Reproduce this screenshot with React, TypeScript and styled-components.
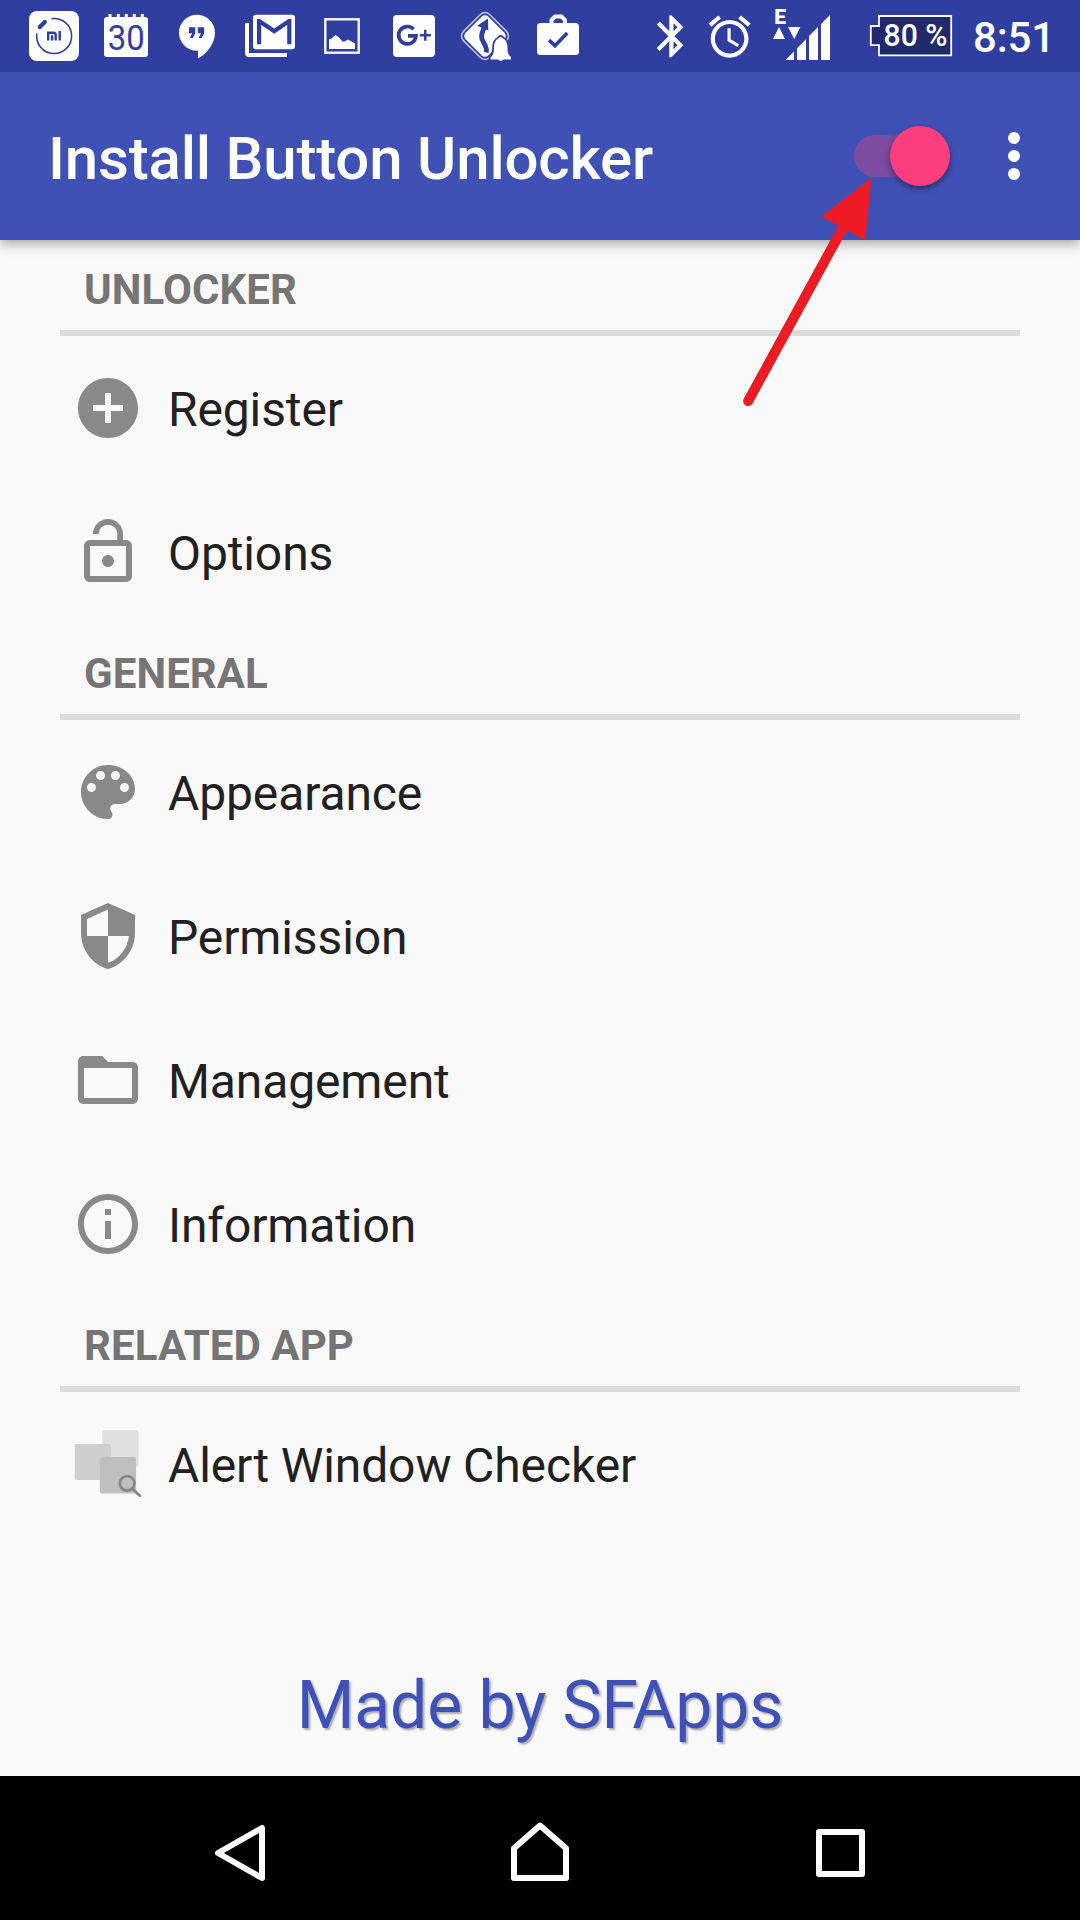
import React from "react";
import styled, { createGlobalStyle } from "styled-components";

const GlobalStyle = createGlobalStyle`
  * { box-sizing: border-box; }
  body { margin: 0; background: #f9f9f9; }
`;

const INK = "#303e9f";

const Screen = styled.div`
  position: relative;
  display: flex;
  flex-direction: column;
  width: 1080px;
  height: 1920px;
  overflow: hidden;
  background: #f9f9f9;
  color: #212121;
  font-family: Roboto, "Noto Sans", sans-serif;
`;

const StatusBar = styled.header`
  position: relative;
  z-index: 1;
  display: flex;
  flex: none;
  align-items: center;
  height: 72px;
  padding-left: 18px;
  padding-right: 29px;
  background: ${INK};
  color: #fff;
`;

const StatusGroup = styled.div<{ $end?: boolean }>`
  display: flex;
  align-items: center;
  margin-left: ${(p) => (p.$end ? "auto" : "0")};
`;

const Glyph = styled.svg`
  display: block;
  flex: none;
`;

const Clock = styled.time`
  width: 78px;
  margin-left: 17px;
  font-size: 42px;
  font-weight: 500;
  line-height: 48px;
  letter-spacing: -0.2px;
  white-space: nowrap;
  padding-top: 4px;
`;

const AppBar = styled.div`
  position: relative;
  display: flex;
  flex: none;
  align-items: center;
  height: 168px;
  padding: 0 36px 0 48px;
  background: #3f51b5;
  box-shadow: 0 3px 12px rgba(0, 0, 0, 0.38);
`;

const Title = styled.h1`
  flex: 1;
  margin: 0;
  padding-top: 5px;
  color: #fff;
  font-size: 60px;
  font-weight: 500;
  line-height: 70px;
  letter-spacing: -0.19px;
  white-space: nowrap;
`;

const Track = styled.div`
  display: flex;
  align-items: center;
  justify-content: flex-end;
  width: 96px;
  height: 42px;
  margin-right: 34px;
  border-radius: 21px;
  background: #7b4ca0;
`;

const Thumb = styled.div`
  flex: none;
  width: 60px;
  height: 60px;
  border-radius: 50%;
  background: #fa3e7e;
  box-shadow: 0 3px 6px rgba(0, 0, 0, 0.4);
`;

const Overflow = styled.div`
  display: flex;
  flex-direction: column;
  align-items: center;
  gap: 6px;
  width: 60px;
`;

const Dot = styled.i`
  width: 12px;
  height: 12px;
  border-radius: 50%;
  background: #fff;
`;

const Content = styled.main`
  display: flex;
  flex: 1;
  flex-direction: column;
  padding: 0 60px;
`;

const SectionTitle = styled.h2`
  height: 96px;
  margin: 0;
  padding: 25px 24px 0;
  border-bottom: 6px solid #dbdbdb;
  color: #757575;
  font-size: 42px;
  font-weight: 700;
  line-height: 49px;
  letter-spacing: 0.08px;
`;

const Row = styled.div`
  display: flex;
  align-items: center;
  gap: 24px;
  height: 144px;
  padding-left: 12px;
`;

const RowLabel = styled.span`
  padding-top: 3px;
  font-size: 48px;
  line-height: 56px;
  letter-spacing: -0.12px;
`;

const Credit = styled.footer`
  margin-top: auto;
  padding-bottom: 31px;
  color: #3f51b5;
  font-size: 66px;
  line-height: 78px;
  letter-spacing: -0.1px;
  text-align: center;
  text-shadow: 2px 2px 2px rgba(0, 0, 0, 0.3);
`;

const NavBar = styled.nav`
  display: flex;
  flex: none;
  align-items: center;
  justify-content: center;
  gap: 210px;
  height: 144px;
  background: #000;
`;

const Pointer = styled.svg`
  position: absolute;
  left: 736px;
  top: 170px;
`;

function StatusIcon({ x, w = 72, children }: { x: number; w?: number; children: React.ReactNode }) {
  return (
    <Glyph width={w} height={72} viewBox={`${x} 0 ${w} 72`} fill="#fff">
      {children}
    </Glyph>
  );
}

function NotificationIcons() {
  return (
    <StatusGroup>
      <StatusIcon x={18}>
        <rect x="29" y="11" width="50" height="50" rx="8" />
        <path d="M51.5 18.700A17.500 17.500 0 1 1 36.800 33.500" fill="none" stroke={INK} strokeWidth="1.600" />
        <path d="M39.800 27l5-5" stroke={INK} strokeWidth="4.200" strokeLinecap="round" />
        <path d="M48.200 40.500v-7.800h5.300q2.200 0 2.200 2.300v5.500M52.100 35.300v5.200M59.700 31v9.500" fill="none" stroke={INK} strokeWidth="2.400" />
      </StatusIcon>
      <StatusIcon x={90}>
        <rect x="104" y="17" width="44" height="40" rx="3" />
        <path d="M110 14v5M118.300 14v5M126.300 14v5M134.300 14v5M142.300 14v5" stroke="#fff" strokeWidth="3" />
        <text x="107.700" y="50" fill={INK} fontFamily="Roboto" fontWeight="400" fontSize="34.500" textLength="37" lengthAdjust="spacingAndGlyphs">30</text>
      </StatusIcon>
      <StatusIcon x={162}>
        <path d="M197 14.700c-10 0-18 8-18 18s8 18 18 18h1v7.500c8.500-4 17-14.500 17-25.500 0-10-8-18-18-18z" />
        <path d="M189 27.200h6.300v6l-2.500 4.800h-3l2.300-4.800H189zM197.800 27.200h6.400v6l-2.500 4.800h-3l2.300-4.800h-3.200z" fill={INK} />
      </StatusIcon>
      <StatusIcon x={234}>
        <path d="M247 23v30q0 2 2 2h38" fill="none" stroke="#fff" strokeWidth="4" />
        <rect x="253" y="14.700" width="42" height="34.500" rx="3" />
        <path d="M257 44.300V19h3l14.200 9.500L288.400 19h3v25.300h-4.200V25l-13 8.700L261.200 25v19.300z" fill={INK} />
      </StatusIcon>
      <StatusIcon x={306}>
        <rect x="325.300" y="19.300" width="33.400" height="33.400" fill="none" stroke="#fff" strokeWidth="2.300" />
        <path d="M329 49v-9.500l2.500-1L335.500 35l3 2 4 4.500h2l3.500-2 7 4V49z" />
      </StatusIcon>
      <StatusIcon x={378}>
        <rect x="393" y="15" width="42" height="42" rx="4" />
        <path d="M413.600 29.200A8.700 8.700 0 1 0 416 35.800H408" fill="none" stroke={INK} strokeWidth="3.700" />
        <path d="M419.800 35.200h11M425.300 29.700v11" stroke={INK} strokeWidth="2.500" />
      </StatusIcon>
      <StatusIcon x={450}>
        <rect x="466.500" y="17.500" width="37" height="37" rx="6.500" transform="rotate(45 485 36)" fill="none" stroke="#c3c8e6" strokeWidth="1.500" />
        <rect x="469" y="20" width="32" height="32" rx="4.500" transform="rotate(45 485 36)" />
        <path d="M486.300 52.500c1.500-7-4.800-10-4.800-16 0-4.500 2.300-6 2.500-9.500" fill="none" stroke={INK} strokeWidth="4.800" />
        <path d="M477.300 25.700l10.700-7.200.300 12z" fill={INK} />
        <path d="M490.500 57.500c3-3 3.500-5 3.500-10 0-5 2-8 4.700-9.200q2-3 4 0c2.800 1.200 4.800 4.200 4.800 9.200 0 5 .5 7 3.500 9.500v2.500h-7.500q-2.700 2.800-5.400 0h-7.600z" stroke={INK} strokeWidth="3.500" />
        <path d="M490.500 57.500c3-3 3.500-5 3.500-10 0-5 2-8 4.700-9.200q2-3 4 0c2.800 1.200 4.800 4.200 4.800 9.200 0 5 .5 7 3.500 9.500v2.500h-7.500q-2.700 2.800-5.400 0h-7.600z" />
      </StatusIcon>
      <StatusIcon x={522}>
        <rect x="537" y="23" width="42" height="32" rx="3.500" />
        <path d="M551.500 24v-4l3.500-3.500h6.500l3.500 3.500v4" fill="none" stroke="#fff" strokeWidth="4" />
        <path d="M549 40.200l6 5.500L567.200 33" fill="none" stroke={INK} strokeWidth="3.600" />
      </StatusIcon>
    </StatusGroup>
  );
}

function SystemIcons() {
  return (
    <StatusGroup $end>
      <StatusIcon x={640} w={60}>
        <path
          transform="translate(646.200 11) scale(2.100)"
          d="M17.710 7.710L12 2h-1v7.590L6.410 5 5 6.410 10.590 12 5 17.590 6.410 19 11 14.410V22h1l5.710-5.710-4.300-4.290 4.300-4.290zM13 5.830l1.880 1.880L13 9.590V5.830zm1.880 10.460L13 18.170v-3.760l1.880 1.880z"
        />
      </StatusIcon>
      <StatusIcon x={700} w={60}>
        <path
          transform="translate(704.400 11.500) scale(2.100)"
          d="M22 5.720l-4.600-3.860-1.290 1.530 4.600 3.860L22 5.720zM7.880 3.390L6.600 1.860 2 5.710l1.290 1.530 4.590-3.850zM12.500 8H11v6l4.750 2.850.750-1.230-4-2.370V8zM12 4c-4.970 0-9 4.030-9 9s4.020 9 9 9c4.970 0 9-4.030 9-9s-4.030-9-9-9zm0 16c-3.870 0-7-3.130-7-7s3.130-7 7-7 7 3.130 7 7-3.130 7-7 7z"
        />
      </StatusIcon>
      <StatusIcon x={760} w={104}>
        <text x="774.300" y="24" fontFamily="Roboto" fontWeight="900" fontSize="21">E</text>
        <path d="M773 39l6-12 6 12zM788 27h12.500l-6.250 12z" />
        <path d="M785.500 60l8.500-8.500V60zM797 60V48.300l9-9V60zM809 60V36l9-9v33zM821 60V24l9-9v45z" />
      </StatusIcon>
      <StatusIcon x={864} w={92}>
        <path d="M879 16h72.200v39.300H879V45.200h-8.200V26H879z" fill="#232a6c" stroke="#fff" strokeWidth="1.800" />
        <text x="883.600" y="46" fontFamily="Roboto" fontWeight="500" fontSize="31.500" textLength="64" lengthAdjust="spacingAndGlyphs">80 %</text>
      </StatusIcon>
      <Clock>8:51</Clock>
    </StatusGroup>
  );
}

const icons = {
  add: "M12 2C6.480 2 2 6.480 2 12s4.480 10 10 10 10-4.480 10-10S17.520 2 12 2zm5 11h-4v4h-2v-4H7v-2h4V7h2v4h4v2z",
  lock: "M12 17c1.100 0 2-.9 2-2s-.9-2-2-2-2 .9-2 2 .9 2 2 2zm6-9h-1V6c0-2.760-2.240-5-5-5S7 3.240 7 6h1.900c0-1.710 1.390-3.100 3.100-3.100 1.710 0 3.100 1.390 3.100 3.100v2H6c-1.100 0-2 .9-2 2v10c0 1.100.9 2 2 2h12c1.100 0 2-.9 2-2V10c0-1.100-.9-2-2-2zm0 12H6V10h12v10z",
  palette:
    "M12 3c-4.970 0-9 4.030-9 9s4.030 9 9 9c.830 0 1.500-.670 1.500-1.500 0-.390-.150-.740-.390-1.010-.230-.260-.380-.610-.380-.990 0-.830.670-1.500 1.500-1.500H16c2.760 0 5-2.240 5-5 0-4.420-4.030-8-9-8zm-5.500 9c-.830 0-1.500-.670-1.500-1.500S5.670 9 6.500 9 8 9.670 8 10.500 7.330 12 6.500 12zm3-4C8.670 8 8 7.330 8 6.500S8.670 5 9.500 5s1.500.670 1.500 1.500S10.330 8 9.500 8zm5 0c-.830 0-1.500-.670-1.500-1.500S13.670 5 14.500 5s1.500.670 1.500 1.500S15.330 8 14.500 8zm3 4c-.830 0-1.500-.670-1.500-1.500S16.670 9 17.500 9s1.500.670 1.500 1.500-.670 1.500-1.500 1.500z",
  shield:
    "M12 1L3 5v6c0 5.550 3.840 10.740 9 12 5.160-1.260 9-6.450 9-12V5l-9-4zm0 10.990h7c-.530 4.120-3.280 7.790-7 8.940V12H5V6.300l7-3.110v8.800z",
  folder:
    "M3.800 4H10.100L12 6h8.200c1 0 1.800.8 1.800 1.800v10.400c0 1-.8 1.800-1.800 1.800H3.800c-1 0-1.800-.8-1.800-1.800V5.800C2 4.800 2.800 4 3.800 4zM4 8v10h16V8z",
  info: "M11 17h2v-6h-2v6zm1-15C6.480 2 2 6.480 2 12s4.480 10 10 10 10-4.480 10-10S17.520 2 12 2zm0 18c-4.410 0-8-3.590-8-8s3.590-8 8-8 8 3.590 8 8-3.590 8-8 8zM11 9h2V7h-2v2z",
};

function Item({ icon, label }: { icon: keyof typeof icons; label: string }) {
  return (
    <Row>
      <Glyph width="72" height="72" viewBox="0 0 24 24" fill="#898989">
        <path fillRule="evenodd" d={icons[icon]} />
      </Glyph>
      <RowLabel>{label}</RowLabel>
    </Row>
  );
}

export default function App() {
  return (
    <Screen>
      <GlobalStyle />
      <StatusBar>
        <NotificationIcons />
        <SystemIcons />
      </StatusBar>
      <AppBar>
        <Title>Install Button Unlocker</Title>
        <Track>
          <Thumb />
        </Track>
        <Overflow>
          <Dot />
          <Dot />
          <Dot />
        </Overflow>
      </AppBar>
      <Content>
        <SectionTitle>UNLOCKER</SectionTitle>
        <Item icon="add" label="Register" />
        <Item icon="lock" label="Options" />
        <SectionTitle>GENERAL</SectionTitle>
        <Item icon="palette" label="Appearance" />
        <Item icon="shield" label="Permission" />
        <Item icon="folder" label="Management" />
        <Item icon="info" label="Information" />
        <SectionTitle>RELATED APP</SectionTitle>
        <Row>
          <Glyph width="72" height="72" viewBox="0 0 72 72">
            <rect x="30.200" y="2.300" width="36.300" height="36.500" rx="2" fill="#e1e1e1" />
            <rect x="2.700" y="16" width="36.300" height="36" rx="2" fill="#cfcfcf" />
            <rect x="27.800" y="29" width="36.300" height="36.500" rx="2" fill="#bfbfbf" />
            <circle cx="55.100" cy="55.300" r="7.300" fill="none" stroke="#858585" strokeWidth="2.600" />
            <path d="M60.500 60.800l7.300 7" stroke="#858585" strokeWidth="2.800" strokeLinecap="round" />
          </Glyph>
          <RowLabel>Alert Window Checker</RowLabel>
        </Row>
        <Credit>Made by SFApps</Credit>
      </Content>
      <NavBar>
        <Glyph width="90" height="90" viewBox="195 1803 90 90" fill="none" stroke="#fff" strokeWidth="6" strokeLinejoin="round">
          <path d="M262 1828v50L218 1853z" />
        </Glyph>
        <Glyph width="90" height="90" viewBox="495 1803 90 90" fill="none" stroke="#fff" strokeWidth="6" strokeLinejoin="round">
          <path d="M540 1825.500l26 22.700V1878h-52v-29.800z" />
        </Glyph>
        <Glyph width="90" height="90" viewBox="795 1803 90 90" fill="none" stroke="#fff" strokeWidth="6" strokeLinejoin="round">
          <path d="M819 1832h43v42h-43z" />
        </Glyph>
      </NavBar>
      <Pointer width="150" height="245" viewBox="736 170 150 245">
        <path d="M748.200 401L846 222" stroke="#ed1c24" strokeWidth="10" strokeLinecap="round" />
        <path d="M871.300 178l-49.800 38.500 43.700 23.800z" fill="#ed1c24" />
      </Pointer>
    </Screen>
  );
}
